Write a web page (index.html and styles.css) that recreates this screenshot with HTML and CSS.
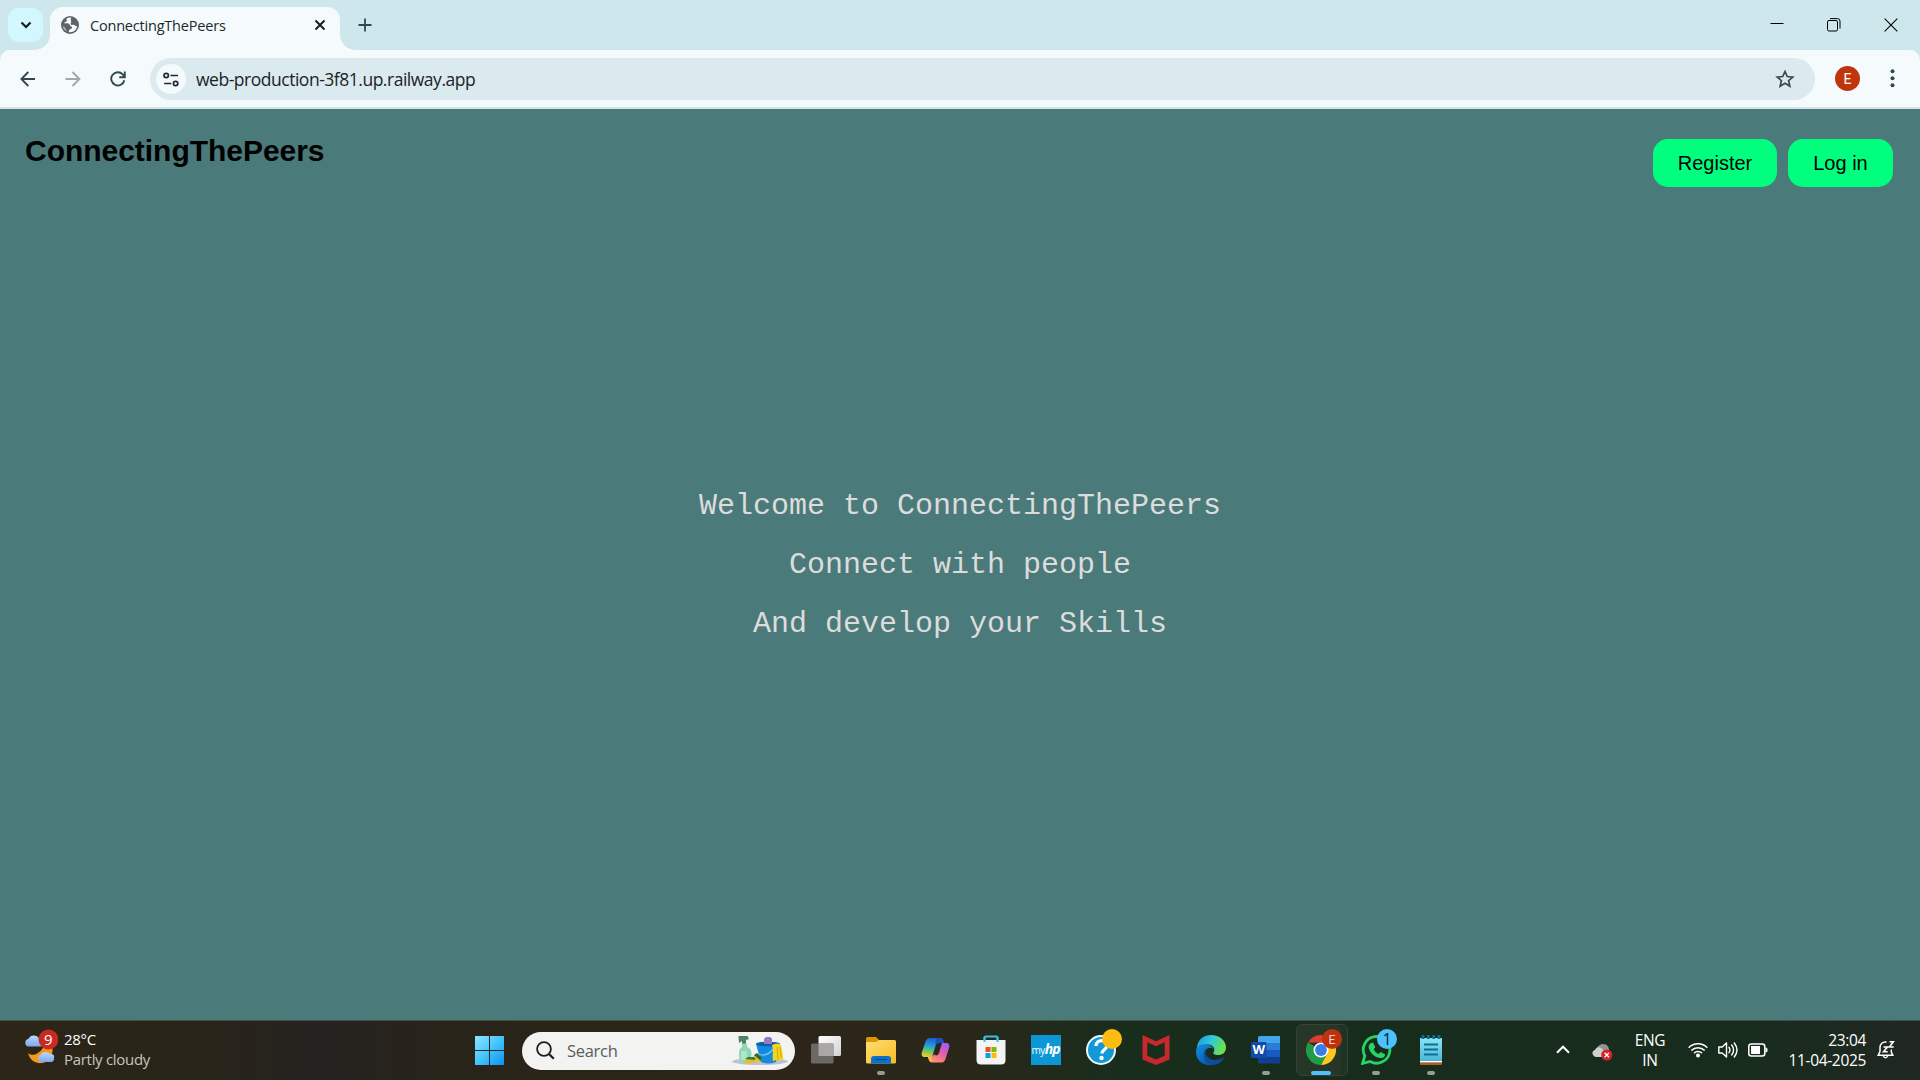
FILE: index.html
```html
<!DOCTYPE html>
<html lang="en">
<head>
<meta charset="utf-8">
<title>ConnectingThePeers</title>
<link rel="stylesheet" href="styles.css">
</head>
<body>
<div class="tabstrip">
  <div class="tab-search"><svg width="12" height="8" viewBox="0 0 12 8"><path d="M1.500 1.500 6 6l4.500-4.500" fill="none" stroke="#101c1f" stroke-width="2.200"/></svg></div>
  <div class="tab">
    <svg class="favicon" width="18" height="18" viewBox="0 0 18 18"><circle cx="9" cy="9" r="9" fill="#5f6368"/><path d="M10.500 1.600C8 1 5.500 2 5.200 3.600c1 .5.800 1.800-.2 2.200-.8.400-1.700.3-2 1.500 1.200.3 4-.6 5.300.6 1 .9.200 2 1.700 2.300 1.400.2 1.200 1.800.3 2.600-.8.700-2.500.5-2.500 3.300 4 1 8-2 8.400-6-.900.400-1.700-.200-2.600-.9-1.200-.8-2.800.2-3.700-.8-.8-1 .5-1.700.3-3C10 4.400 9 3 10.500 1.600z" fill="#f5fafd"/><path d="M1.600 8.500c.3 2.600 1.600 2.200 2.700 3.300.7.800.2 2.100 1.700 3.800C3.500 14.500 1.500 12 1.600 8.500z" fill="#f5fafd" opacity=".55"/></svg>
    <span class="tab-title">ConnectingThePeers</span>
    <svg width="12" height="12" viewBox="0 0 12 12"><path d="M1.500 1.500l9 9m0-9l-9 9" stroke="#15191b" stroke-width="1.900"/></svg>
  </div>
  <svg class="newtab" width="14" height="14" viewBox="0 0 14 14"><path d="M7 .5v13M.5 7h13" stroke="#2e4a50" stroke-width="1.800"/></svg>
  <div class="window-controls">
    <svg width="14" height="14" viewBox="0 0 14 14"><path d="M.5 5.500h13" stroke="#000"/></svg>
    <svg width="14" height="14" viewBox="0 0 14 14"><rect x=".5" y="2.500" width="10" height="10.500" rx="1.500" fill="none" stroke="#000"/><path d="M3 .6h7.500a2.500 2.500 0 0 1 2.500 2.500v7.400" fill="none" stroke="#000"/></svg>
    <svg width="14" height="14" viewBox="0 0 14 14"><path d="M.7.7l12.600 12.600m0-12.600L.7 13.300" stroke="#000" stroke-width="1.100"/></svg>
  </div>
</div>
<div class="toolbar">
  <div class="nav">
    <svg width="16" height="16" viewBox="0 0 16 16"><path d="M15 8H1.500M8.300 1L1.400 8l6.900 7" fill="none" stroke="#2e4a50" stroke-width="1.900"/></svg>
    <svg width="16" height="16" viewBox="0 0 16 16"><path d="M.5 8h13.700M7.500 1l6.900 7-6.900 7" fill="none" stroke="#a0a8ab" stroke-width="1.900"/></svg>
    <svg width="16" height="16" viewBox="0 0 16 16"><path d="M14.300 9.200A6.600 6.600 0 1 1 12.700 3.400L14.300 5.200M14.800.5v5.700H9.300" fill="none" stroke="#2e4a50" stroke-width="1.900"/></svg>
  </div>
  <div class="address">
    <span class="site-info"><svg width="16" height="15" viewBox="0 0 16 15"><g fill="none" stroke="#1c2b2f" stroke-width="1.700"><circle cx="3.200" cy="3.500" r="2.200"/><path d="M7.500 3.500h7.500M1.200 11.500h7"/><circle cx="12.600" cy="11.500" r="2.200"/></g></svg></span>
    <span class="url">web-production-3f81.up.railway.app</span>
    <svg width="20" height="20" viewBox="0 0 20 20"><path d="M10 2.500l2.250 5.050 5.500.5-4.150 3.650 1.250 5.450L10 14.250l-4.850 2.900L6.400 11.700 2.250 8.050l5.500-.5z" fill="none" stroke="#3c464a" stroke-width="1.700"/></svg>
  </div>
  <span class="avatar">E</span>
  <svg width="5" height="19" viewBox="0 0 5 19" fill="#2e4a50"><circle cx="2.500" cy="2.300" r="2"/><circle cx="2.500" cy="9.300" r="2"/><circle cx="2.500" cy="16.300" r="2"/></svg>
</div>
<main class="page">
  <header class="site-header">
    <h1>ConnectingThePeers</h1>
    <nav><a class="button register">Register</a><a class="button login">Log in</a></nav>
  </header>
  <section class="hero"><p>Welcome to ConnectingThePeers</p><p>Connect with people</p><p>And develop your Skills</p></section>
</main>
<footer class="taskbar">
  <div class="weather">
    <svg width="34" height="36" viewBox="0 0 34 36"><defs><linearGradient id="cloud" x2="0" y2="1"><stop stop-color="#b9d7ff"/><stop offset="1" stop-color="#7fa6ec"/></linearGradient></defs><path d="M4 24c2 2 6 2.600 9.500.2C17 22 20 19 20 15l8 2c2 5-1 14-7.500 16.500C12 36 5.500 31 4 24z" fill="#f6971d"/><path d="M4 17.500a4 4 0 0 1 .6-7.700 6 6 0 0 1 10.500-.3c6 0 6 8 1 8z" fill="url(#cloud)"/><path d="M16 33a4 4 0 0 1 .4-7.200 6 6 0 0 1 9.300-1c4-.2 5.300 2.700 4.200 4.200C30.500 31 29 33 27 33z" fill="url(#cloud)"/><circle cx="24.500" cy="10.500" r="10" fill="#c72b20"/><text x="24.300" y="16" text-anchor="middle" class="weather-badge">9</text></svg>
    <div class="weather-text"><span>28°C</span><span class="muted">Partly cloudy</span></div>
  </div>
  <div class="apps">
    <div class="start"><svg width="29" height="29" viewBox="0 0 29 29"><defs><linearGradient id="win" x2="1" y2="1"><stop stop-color="#8ee4ff"/><stop offset=".5" stop-color="#43c5fc"/><stop offset="1" stop-color="#0a90f4"/></linearGradient></defs><path d="M0 .5Q0 0 .5 0H14v14H0zM15 0h13.500Q29 0 29 .5V14H15zM0 15h14v14H.5Q0 29 0 28.500zM15 15h14v13.500q0 .5-.5.500H15z" fill="url(#win)"/></svg></div>
    <div class="search">
      <svg width="19" height="19" viewBox="0 0 19 19"><circle cx="8" cy="8" r="6.900" fill="none" stroke="#202020" stroke-width="1.800"/><path d="M13 13l4.800 4.800" stroke="#202020" stroke-width="2.300"/></svg>
      <span>Search</span>
      <svg width="58" height="32" viewBox="0 0 58 32"><ellipse cx="29" cy="26.500" rx="28" ry="3.500" fill="#bcc0d6"/><path d="M7.500 1h9l1.500 3-3 1v4h-4V6l-3 2z" fill="#4b8566"/><path d="M11 8.500h5v3.500c3 1 4.500 3.500 4.500 6.500l-.7 8q-6 2.500-11.300 0l-.5-8c0-3 1-5.500 3-6.500z" fill="#8fd7b5"/><path d="M10 16h6v9h-6z" fill="#b9ecd2" opacity=".7"/><path d="M33 8l1-5 2-1h3l2 2v5h-8z" fill="#9b79be"/><path d="M25 9q12-4 24 0l-4 18q-8 3-15 0z" fill="#168ae0"/><ellipse cx="37" cy="9" rx="12" ry="2.300" fill="#0862ae"/><path d="M33 9V4l2-2h4l2 2v5z" fill="#9b79be"/><path d="M27 19q9 4 17-7" fill="none" stroke="#72c4f6" stroke-width="1.300"/><path d="M41 10q6-3 9 0c.5 5 3 10 2 15l-3-1-1 3-3-2-3 1c-1-6 1-9-1-16z" fill="#f3d51d"/><path d="M46 12l1 13M49 12l1 11" stroke="#ceaa06"/><path d="M14 25l3-2h8l1 4q-6 2-12 1z" fill="#e8bf20"/><path d="M14 24l3-2h8l-1 3z" fill="#2f7d45"/><path d="M22 21l3-2 6 5-2 4z" fill="#e8bf20"/><path d="M23 20l3-2 5 5-1 3z" fill="#256b38"/></svg>
    </div>
    <div class="app"><svg width="30" height="30" viewBox="0 0 30 30"><defs><linearGradient id="tv" x2="1" y2="1"><stop stop-color="#fff"/><stop offset="1" stop-color="#d2d2d2"/></linearGradient></defs><rect x="7.500" y="1" width="22.500" height="20" rx="1.500" fill="url(#tv)"/><rect y="8.500" width="22.500" height="20" rx="1.500" fill="#6b6966"/><path d="M7.500 8.500h15V21h-15z" fill="#aaa8a6"/></svg></div>
    <div class="app running"><svg width="30" height="30" viewBox="0 0 30 30"><defs><linearGradient id="folder" x2="1" y2="1"><stop stop-color="#ffdf72"/><stop offset="1" stop-color="#f9bb22"/></linearGradient></defs><path d="M0 3.500Q0 2 1.500 2H10l3 3v5H0z" fill="#db9600"/><path d="M0 8q0-1 1-1h9l3-2h15.500Q30 5 30 6.500V27q0 1.500-1.500 1.500h-27Q0 28.500 0 27z" fill="url(#folder)"/><path d="M5 28.500V24q0-3 3-3h14q3 0 3 3v4.500z" fill="#0a72ca"/><path d="M9 24.500h12" stroke="#034780" stroke-width="1.200"/></svg></div>
    <div class="app"><svg width="30" height="30" viewBox="0 0 30 30"><defs><linearGradient id="cop1" x1=".5" x2=".3" y2="1"><stop stop-color="#1b58dd"/><stop offset=".45" stop-color="#24a2d5"/><stop offset=".72" stop-color="#77c75b"/><stop offset="1" stop-color="#f0cb27"/></linearGradient><linearGradient id="cop2" x1=".8" x2=".3" y2="1"><stop stop-color="#a35af0"/><stop offset=".5" stop-color="#e65fa8"/><stop offset="1" stop-color="#ff9468"/></linearGradient></defs><path d="M15 3h4c2 0 3 1 4 5h-5c-2 0-3 1-3.500 3L12 19c-.7 2-1.500 3-4 3H4c-3 0-4-2-3-5L4.500 6.500C5.500 4 7 3 9 3z" fill="url(#cop1)"/><path d="M15 3h4c2 0 3 1 4 5h-5c-2 0-3 1-3.500 3z" fill="#194fbe"/><path d="M22 8h3c3 0 4 2 3 5l-3.500 11c-1 3-2.500 3.500-4.500 3.500h-9C9 27.500 8 25 7 22h2c2 0 3.500-1 4-3 1 2 4 2 5-1l3-10z" fill="url(#cop2)"/><path d="M7 22c3 0 4.500-1 5-3l-2 8.500C8.500 27 7.500 25 7 22z" fill="#ffb257"/></svg></div>
    <div class="app"><svg width="30" height="30" viewBox="0 0 30 30"><path d="M8.500 7V2.500q0-1 1-1h11q1 0 1 1V7" fill="none" stroke="#35bdeb" stroke-width="2"/><path d="M.5 5h29v20q0 4.500-4.500 4.500H5Q.5 29.500.5 25z" fill="#f4f4f4"/><path d="M8.500 2v5m13-5v5" stroke="#35bdeb" stroke-width="2"/><path d="M9.500 12h5v5h-5z" fill="#f25022"/><path d="M15.500 12h5v5h-5z" fill="#7fba00"/><path d="M9.500 18h5v5h-5z" fill="#00a4ef"/><path d="M15.500 18h5v5h-5z" fill="#ffb900"/></svg></div>
    <div class="app"><span class="myhp"><span>my</span><b>hp</b></span></div>
    <div class="app"><svg class="help" width="36" height="36" viewBox="0 0 36 36"><circle cx="15" cy="21" r="14" fill="#1199d7" stroke="#eef8fb" stroke-width="2"/><path d="M10 17c0-7 11-7 11-.5 0 4-5 4-5 8" fill="none" stroke="#fff" stroke-width="3.300"/><circle cx="15.500" cy="29" r="2.200" fill="#fff"/><circle cx="26" cy="10" r="10" fill="#ffbc10"/></svg></div>
    <div class="app"><svg width="30" height="30" viewBox="0 0 30 30"><path d="M1.500 0L15 6.300 28.500 0v24.500L15 30 1.500 24.500zM6.300 7.300v13.400l8.700 3.800 8.700-3.800V7.300L15 11.300z" fill="#c5292e" fill-rule="evenodd"/></svg></div>
    <div class="app"><svg width="30" height="30" viewBox="0 0 30 30"><defs><linearGradient id="edge1" x2="1" y2=".3"><stop stop-color="#1695dc"/><stop offset=".55" stop-color="#31c7da"/><stop offset="1" stop-color="#6be04e"/></linearGradient><linearGradient id="edge2" x2=".6" y2="1"><stop stop-color="#1590df"/><stop offset="1" stop-color="#0759af"/></linearGradient></defs><path d="M1 12C2 4 8 0 15 0c9 0 15 6 15 12.500 0 5-3.500 7.500-8 7.500-3.500 0-5.500-1-4.500-2.500 2-3 .5-7.500-5.500-8C6 9 1.500 13 .3 17z" fill="url(#edge1)"/><path d="M0 16C.5 11 5 8.500 10 9.300c4 .6 7 2.500 7.500 5C13 11 8.500 14 8.800 19c.4 5 4 9 8.200 10.800C7 31.500-.5 25 0 16z" fill="url(#edge2)"/><path d="M11 12.500c-4 5 .5 12.500 8 12.500 3 0 6-1 8-2.500.8-.4 1 .3.600 1C25 28 20.500 30 16 30 8 28.500 5 17 11 12.500z" fill="#0b4d9a"/><path d="M12.500 14c2-2 5-1.200 5.100 1-1 2.700-.8 3.800.9 5.300 1.300 1 3 1.500 4 1.600-6 1.700-12-2.500-10-7.900z" fill="#192d1c"/></svg></div>
    <div class="app running"><svg width="30" height="30" viewBox="0 0 30 30"><path d="M7 2.500Q7 1 8.500 1H29v7.500H7z" fill="#41a5ee"/><path d="M7 8h22v7H7z" fill="#2b7cd3"/><path d="M7 15h22v7H7z" fill="#185abd"/><path d="M7 22h22v6.500H8.500Q7 28.500 7 27z" fill="#103f91"/><rect y="7" width="15.500" height="16" rx="1.500" fill="#124caa"/><text x="7.700" y="19" text-anchor="middle" class="word-letter">W</text></svg></div>
    <div class="app running active"><svg class="badged" width="36" height="36" viewBox="0 0 36 36"><path d="M2 13.500A15 15 0 0 1 28 13.500H15z" fill="#e13b31"/><path d="M15 21L2 13.500A15 15 0 0 0 15 36l7-11z" fill="#229b48"/><path d="M28 13.500A15 15 0 0 1 15 36l6.500-11.500-.5-11z" fill="#fcc821"/><circle cx="15" cy="21" r="7.500" fill="#fff"/><circle cx="15" cy="21" r="5.900" fill="#397ee8"/><circle cx="26" cy="10" r="10" fill="#bd330e"/><text x="26" y="14.500" text-anchor="middle" class="chrome-badge">E</text></svg></div>
    <div class="app running"><svg class="badged" width="36" height="36" viewBox="0 0 36 36"><path d="M1.600 34.400L3.800 27A13.300 13.300 0 1 1 9.200 32.500z" fill="none" stroke="#25d366" stroke-width="2.800"/><path d="M10 14l2-.5 2.300 4.800-1.600 2c1 2.300 2.800 3.800 5 4.700l1.800-2 4.500 2.200c.4 2.600-2.500 4.300-5 3.800-6-1-10.500-5.500-11.300-10.500C7.500 16.500 8.500 14.600 10 14z" fill="#25d366"/><circle cx="26" cy="10" r="10" fill="#4cc2ff"/><text x="26" y="15.500" text-anchor="middle" class="chat-badge">1</text></svg></div>
    <div class="app running"><svg width="22" height="30" viewBox="0 0 22 30"><defs><linearGradient id="note" x2="0" y2="1"><stop stop-color="#8ce4f4"/><stop offset="1" stop-color="#45b4d5"/></linearGradient></defs><path d="M0 3h22v24H0z" fill="url(#note)"/><path d="M0 26h22v1.800H0z" fill="#fff"/><path d="M0 27.500h22V29q0 1-1 1H1q-1 0-1-1z" fill="#b65b1c"/><path d="M3 0v4m5.300-4v4m5.400-4v4M19 0v4" stroke="#087094" stroke-width="2.800"/><path d="M4 9.500h14M4 14.500h14M4 19.500h14" stroke="#087094" stroke-width="2"/></svg></div>
  </div>
  <div class="tray">
    <svg width="14" height="9" viewBox="0 0 14 9"><path d="M1 7.700l6-6 6 6" fill="none" stroke="#fff" stroke-width="2"/></svg>
    <svg class="onedrive" width="21" height="18" viewBox="0 0 21 18"><path d="M4 8C5 3 8 1 11 1c4 0 6 3 6 6l-2 7H4z" fill="#909391"/><path d="M4 14C0 13-1 8 3 7c2-4 6-3 8 0 3 2 2 7 1 7z" fill="#cfd1d0"/><circle cx="14.800" cy="12" r="5.600" fill="#d5222d"/><path d="M12.600 9.800l4.400 4.400m0-4.400l-4.400 4.400" stroke="#fff" stroke-width="1.300"/></svg>
    <span class="language">ENG<br>IN</span>
    <svg width="20" height="16" viewBox="0 0 20 16"><g fill="none" stroke="#fff" stroke-width="1.500"><path d="M.7 5.700a13.200 13.200 0 0 1 18.600 0M3.300 8.500a9.500 9.500 0 0 1 13.400 0M6 11.200a5.700 5.700 0 0 1 8 0"/></g><circle cx="10" cy="13.500" r="2" fill="#fff"/></svg>
    <svg width="20" height="18" viewBox="0 0 20 18"><g fill="none" stroke="#fff" stroke-width="1.400" stroke-linejoin="round"><path d="M.8 6h3.400L8.500 2v14l-4.300-4H.8z"/><path d="M11 6.300q2 2.700 0 5.400M13.700 4q3.800 5 0 10M16.300 2q5.400 7 0 14" stroke-linecap="round"/></g></svg>
    <svg width="20" height="14" viewBox="0 0 20 14"><rect x=".8" y="1" width="16" height="12" rx="2.500" fill="none" stroke="#fff" stroke-width="1.500"/><path d="M3 3h9v8H3zM17.500 4.500q2.500.5 2 2.500.5 2-2 2.500z" fill="#fff"/></svg>
    <span class="clock">23:04<br>11-04-2025</span>
    <svg class="bell" width="18" height="20" viewBox="0 0 18 20"><g fill="none" stroke="#fff" stroke-width="1.500"><path d="M9.500 2C5.500 1.500 3 4 3 7.500v4L1.200 15.200h14.600L14.300 12V9.500M6 15.500q2.500 4.500 5 0"/><path d="M6.500 7h4l-4 4.800h4.200M12.500 1.800h3.800L12.500 7h4.200" stroke-width="1.600"/></g></svg>
  </div>
</footer>
</body>
</html>
```
FILE: styles.css
```css
* { box-sizing: border-box; }
body {
  margin: 0;
  width: 1920px;
  height: 1080px;
  overflow: hidden;
  display: grid;
  grid-template-rows: 50px 59px 911px 60px;
  background: #cde7ec;
  font-family: "Open Sans", "Noto Sans", sans-serif;
}
svg { display: block; flex: none; }

.tabstrip { display: flex; align-items: flex-end; padding-left: 8px; background: #cde7ec; }
.tab-search {
  display: grid;
  place-items: center;
  width: 35px;
  height: 34px;
  margin-bottom: 8px;
  border-radius: 11px;
  background: #d3f7ff;
}
.tab {
  position: relative;
  display: flex;
  align-items: center;
  width: 290px;
  height: 43px;
  margin-left: 7px;
  padding: 0 14px 7px 11px;
  border-radius: 13px 13px 0 0;
  background: #f5fafd;
}
.tab::before,
.tab::after {
  content: "";
  position: absolute;
  bottom: 0;
  width: 15px;
  height: 15px;
}
.tab::before { right: 100%; background: radial-gradient(circle at 0 0, transparent 14.5px, #f5fafd 15px); }
.tab::after { left: 100%; background: radial-gradient(circle at 100% 0, transparent 14.5px, #f5fafd 15px); }
.tab-title { flex: 1; padding-left: 11px; font-size: 14.5px; letter-spacing: -0.2px; color: #1b2a2e; white-space: nowrap; }
.newtab { margin: 0 0 18px 18px; }
.window-controls { display: flex; gap: 43px; margin: 0 22px 18px auto; }

.toolbar {
  display: flex;
  align-items: center;
  padding: 0 25px 0 20px;
  border-bottom: 2px solid #d7e5e9;
  border-radius: 10px 10px 0 0;
  background: #f5fafd;
}
.nav { display: flex; gap: 29px; }
.address {
  display: flex;
  align-items: center;
  width: 1665px;
  height: 42px;
  margin: 1px 0 0 24px;
  padding: 0 20px 0 6px;
  border-radius: 21px;
  background: #dbeaee;
}
.site-info { display: grid; place-items: center; width: 30px; height: 30px; border-radius: 50%; background: #f5fafd; }
.url { flex: 1; padding-left: 10px; font-size: 17.5px; letter-spacing: -0.48px; color: #1c2326; }
.avatar {
  display: grid;
  place-items: center;
  width: 25px;
  height: 25px;
  margin: 0 30px 0 20px;
  border-radius: 50%;
  background: #bf360c;
  color: #fff;
  font: 14px Roboto, sans-serif;
}

.page { display: flex; flex-direction: column; background: #4a7a79; font-family: "Liberation Sans", Arial, sans-serif; }
.site-header { display: flex; justify-content: space-between; height: 100px; padding: 24px 27px 0 25px; }
h1 { margin: 1px 0 0; font-size: 30px; line-height: 34px; letter-spacing: -0.03px; color: #000; }
nav { display: flex; gap: 11px; padding-top: 6px; }
.button { height: 48px; border-radius: 15px; background: #00ff7f; color: #000; font-size: 20px; line-height: 48px; text-align: center; }
.register { width: 124px; }
.login { width: 105px; }
.hero { padding-top: 268px; text-align: center; }
.hero p { margin: 0; font: 30px/59px "Liberation Mono", "Courier New", monospace; color: #dcdcdc; }

.taskbar {
  display: grid;
  grid-template-columns: 462px 996px 462px;
  align-items: center;
  border-top: 1px solid #4a5047;
  background: linear-gradient(90deg, #2b2618 0, #292419 200px, #252321 320px, #292419 460px, #2d251a 800px, #2a271a 960px, #192d1c 1120px, #182c1e 1750px, #202722 1920px);
  color: #fff;
}
.weather { display: flex; align-items: center; padding: 0 0 7px 24px; }
.weather-text { display: flex; flex-direction: column; padding: 4px 0 0 6px; font-size: 15px; line-height: 20px; letter-spacing: -0.3px; }
.muted { color: #c8c5be; }
.weather-badge { font-size: 15px; fill: #fff; }
.apps { display: flex; align-items: center; height: 59px; }
.start { display: grid; place-items: center; width: 55px; }
.search {
  display: flex;
  align-items: center;
  width: 273px;
  height: 38px;
  margin: 0 3px 0 5px;
  padding: 0 6px 0 14px;
  border-radius: 19px;
  background: #f3f3f2;
  color: #5c5c5b;
  font-size: 16.500px;
  letter-spacing: -0.3px;
}
.search span { flex: 1; padding-left: 12px; }
.app { position: relative; display: grid; place-items: center; width: 55px; height: 50px; margin-bottom: 2px; }
.app svg { position: relative; }
.running::after {
  content: "";
  position: absolute;
  left: 23.5px;
  bottom: 0;
  width: 8px;
  height: 4px;
  border-radius: 2px;
  background: #969c95;
}
.active::before {
  content: "";
  position: absolute;
  left: 3px;
  width: 50px;
  height: 50px;
  border: 1px solid #354337;
  border-radius: 6px;
  background: #263728;
  box-shadow: inset -6px 0 #1f3223;
}
.active::after { left: 17.500px; width: 20px; background: #4cc2ff; }
.badged, .help { left: 3px; top: -3px; }
.myhp {
  display: flex;
  align-items: baseline;
  justify-content: center;
  width: 30px;
  height: 30px;
  background: #0b96d6;
  font-size: 10px;
  line-height: 28px;
  letter-spacing: -0.5px;
}
.myhp b { font-size: 14px; font-style: italic; letter-spacing: -1px; }
.word-letter { font: bold 13px "Open Sans", sans-serif; fill: #fff; }
.chrome-badge { font: 12px Roboto, sans-serif; fill: #f3d5cb; }
.chat-badge { font-size: 16px; fill: #071c29; }

.tray {
  display: grid;
  grid-template-columns: 36px 38px 58px 30px 30px 20px 98px 29px;
  align-items: center;
  padding: 0 0 2px 98px;
  font-size: 15.500px;
  line-height: 20px;
  letter-spacing: -0.33px;
}
.onedrive { margin-top: 4px; }
.language { width: 40px; text-align: center; }
.clock { text-align: right; white-space: nowrap; }
.bell { margin-left: 11px; }
```
